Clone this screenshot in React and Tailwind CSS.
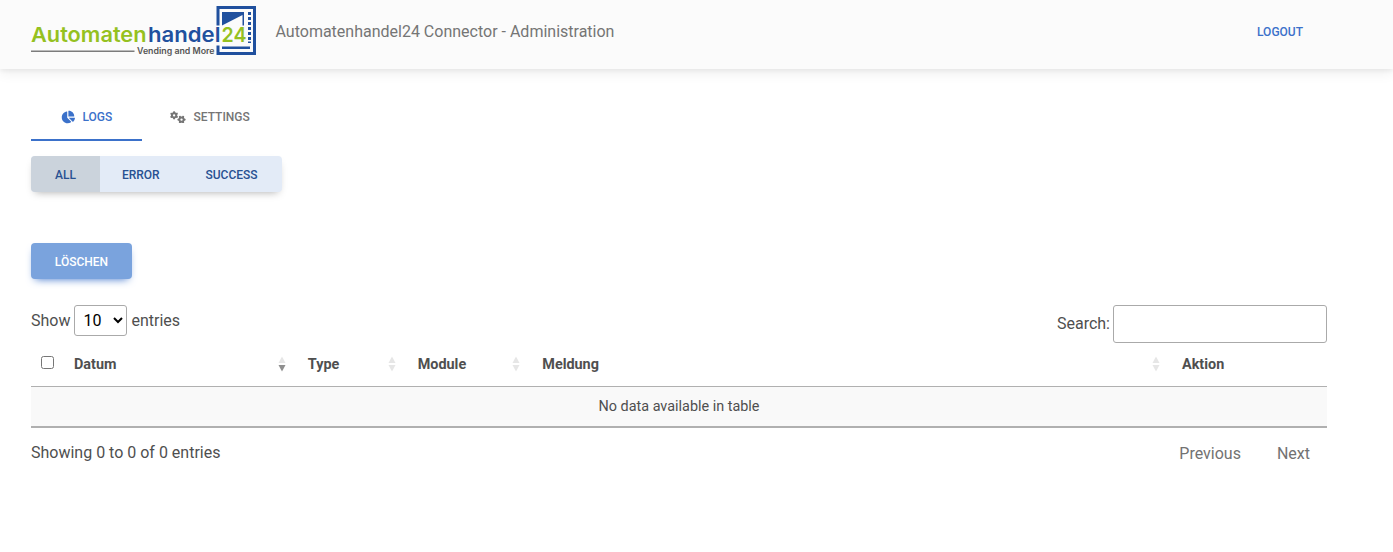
import { FaChartPie, FaGears } from 'react-icons/fa6';

function Logo() {
  return (
    <svg className="block h-[50px] w-[226px]" viewBox="0 0 226 50" role="img" aria-label="Automatenhandel24">
      <path fill="#20509e" d="M185.500 0H225V49H185.500V39.500H188.500V46H222V3H188.500V19.500H185.500z" />
      <path fill="#20509e" d="M191 6h22v13.500h-1.500V9L191 19.500z" />
      <path fill="#20509e" d="M217 6h3v3H217zM217 11h3v3H217zM217 16h3v3H217zM217 21h3v3H217zM217 26h3v3H217zM217 31h3v3H217zM217 35.500h3v1.500H217zM191 40.500h28v2.500h-28z" />
      <g fontFamily="Inter, sans-serif" fontWeight="600" fontSize="20.500">
        <text x="0" y="36" fill="#95c11f" textLength="115.500" lengthAdjust="spacingAndGlyphs">Automaten</text>
        <text x="117" y="36" fill="#20509e" textLength="72.500" lengthAdjust="spacingAndGlyphs">handel</text>
        <text x="190.500" y="36" fill="#95c11f" textLength="25" lengthAdjust="spacingAndGlyphs">24</text>
        <text x="106" y="47.500" fill="#555" fontSize="8.300" textLength="77.500" lengthAdjust="spacingAndGlyphs">Vending and More</text>
      </g>
      <path fill="#7c7c7c" d="M0 44.500h103.500v1.500H0z" />
    </svg>
  );
}

function SortIcon({ down = false }) {
  return (
    <svg className="h-[16px] w-[8px] shrink-0" viewBox="0 0 8 16">
      <path fill="#e6e6e6" d="M4 0.500L7.500 7H.5z" />
      <path fill={down ? '#8f8f8f' : '#e6e6e6'} d="M.5 9h7L4 15.500z" />
    </svg>
  );
}

function HeaderCell({ label, sort, down }) {
  return (
    <th className="h-[43px] p-0 pr-[12px] pl-[10px] text-left font-bold">
      <div className="flex items-center justify-between">
        <span>{label}</span>
        {sort && <SortIcon down={down} />}
      </div>
    </th>
  );
}

export default function App() {
  return (
    <div className="h-[552px] overflow-hidden bg-white font-['Roboto',sans-serif] text-base text-[#4f4f4f]">
      <header className="flex h-[69px] items-start justify-between bg-[#fbfbfb] pr-[90px] pl-[31px] shadow-[0_4px_12px_0_rgba(0,0,0,0.07),0_2px_4px_rgba(0,0,0,0.05)]">
        <div className="flex">
          <div className="pt-[6px]"><Logo /></div>
          <span className="ml-[18.500px] pt-[20px] leading-6 text-[#757575]">Automatenhandel24 Connector - Administration</span>
        </div>
        <a className="pt-[22px] text-xs leading-5 font-medium text-[#3b71ca]">LOGOUT</a>
      </header>

      <main className="pr-[66px] pl-[31px]">
        <nav className="flex pt-[24px] text-xs font-medium">
          <a className="flex h-[48px] w-[111px] items-center border-b-2 border-[#3b71ca] pt-[2px] pl-[29.500px] text-[#3b71ca]">
            <FaChartPie className="mr-[8px] size-[14px]" />LOGS
          </a>
          <a className="flex h-[48px] items-center border-b-2 border-transparent pt-[2px] pl-[28px] text-[#757575]">
            <FaGears className="mr-[7.500px] h-[12.500px] w-[16px]" />SETTINGS
          </a>
        </nav>

        <div className="mt-[15px] flex h-[36px] w-[251px] rounded bg-[#e3ebf7] text-xs font-medium text-[#285192] shadow-[0_4px_9px_-4px_rgba(0,0,0,0.35)]">
          <button className="w-[69px] rounded-l bg-[#cbd3dc] pt-px">ALL</button>
          <button className="w-[81.500px] pt-px">ERROR</button>
          <button className="w-[100px] pt-px">SUCCESS</button>
        </div>

        <button className="mt-[51px] block h-[36px] w-[101px] rounded bg-[#7aa3dd] pt-px text-xs font-medium text-white shadow-[0_4px_9px_-4px_#3b71ca]">LÖSCHEN</button>

        <div className="mt-[26px] flex h-[38px] items-start justify-between">
          <label className="flex h-[31px] items-center">
            Show
            <select className="mx-[4px] h-[31px] w-[53px] rounded-[3px] border border-[#aaa] bg-transparent p-[4px] text-black">
              <option>10</option>
            </select>
            entries
          </label>
          <label className="flex items-center">
            Search:
            <input className="ml-[3px] h-[38px] w-[214px] rounded-[3px] border border-[#aaa] bg-transparent p-[5px]" />
          </label>
        </div>

        <table className="w-[1296px] table-fixed border-separate border-spacing-0 text-[14.4px]">
          <colgroup>
            <col className="w-[33px]" />
            <col className="w-[233.800px]" />
            <col className="w-[109.900px]" />
            <col className="w-[124.600px]" />
            <col className="w-[639.700px]" />
            <col className="w-[155px]" />
          </colgroup>
          <thead>
            <tr>
              <th className="p-0 pl-[10px] text-left"><input type="checkbox" className="mb-[5px] block size-[13px]" /></th>
              <HeaderCell label="Datum" sort down />
              <HeaderCell label="Type" sort />
              <HeaderCell label="Module" sort />
              <HeaderCell label="Meldung" sort />
              <HeaderCell label="Aktion" />
            </tr>
          </thead>
          <tbody>
            <tr>
              <td colSpan="6" className="h-[42px] border-t border-b-2 border-[#b0b0b0] bg-[#f9f9f9] p-0 text-center">No data available in table</td>
            </tr>
          </tbody>
        </table>

        <div className="flex justify-between pt-[13px] leading-6">
          <span>Showing 0 to 0 of 0 entries</span>
          <div className="flex gap-[36px] pt-px pr-[17px] text-[#727272]">
            <a>Previous</a>
            <a>Next</a>
          </div>
        </div>
      </main>
    </div>
  );
}
